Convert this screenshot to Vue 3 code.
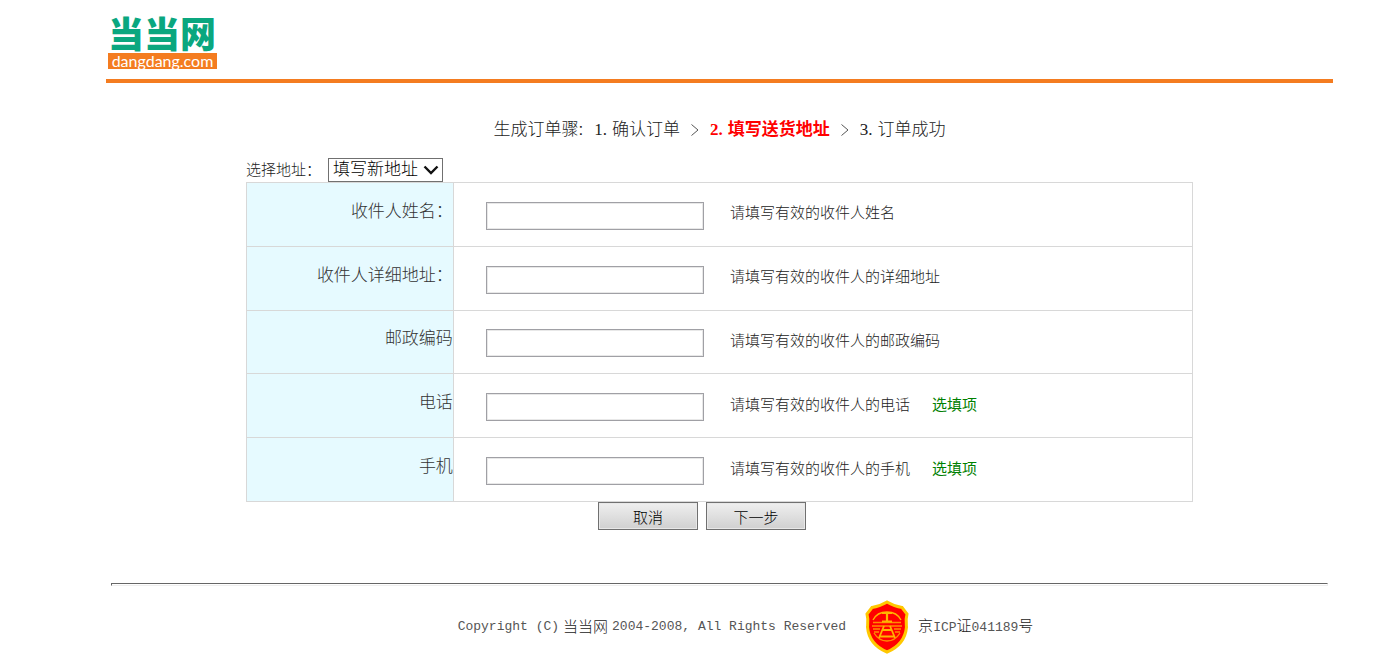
<template>
  <div class="page">
    <header class="header">
      <a href="#" class="logo">
        <span class="logo-name">当当网</span>
        <span class="logo-domain">dangdang.com</span>
      </a>
    </header>

    <main class="content">
      <div class="steps">
        <span>生成订单骤:</span>
        <template v-for="(step, index) in steps" :key="step">
          <svg v-if="index > 0" class="step-arrow" viewBox="0 0 8 14">
            <path d="M0.5 1.5 L7 7 L0.5 12.5" />
          </svg>
          <span :class="{ current: index === 1 }"><span class="step-number">{{ index + 1 }}.</span>{{ step }}</span>
        </template>
      </div>

      <form class="address-form" @submit.prevent>
        <div class="address-picker">
          <label for="address">选择地址：</label>
          <div class="select-box">
            <select id="address">
              <option>填写新地址</option>
            </select>
            <svg class="select-arrow" viewBox="0 0 16 10">
              <path d="M1.5 1.5 L8 8 L14.5 1.5" />
            </svg>
          </div>
        </div>

        <table class="address-table">
          <tbody>
            <tr v-for="field in fields" :key="field.id">
              <th scope="row"><label :for="field.id">{{ field.label }}</label></th>
              <td>
                <div class="field">
                  <input :id="field.id" v-model="form[field.id]" type="text">
                  <span class="hint">{{ field.hint }}</span>
                  <span v-if="field.optional" class="optional">选填项</span>
                </div>
              </td>
            </tr>
          </tbody>
        </table>

        <div class="actions">
          <button type="button">取消</button>
          <button type="submit">下一步</button>
        </div>
      </form>
    </main>

    <footer class="footer">
      <hr>
      <div class="footer-info">
        <p class="copyright">
          <span class="latin">Copyright (C)</span>
          <span>当当网</span>
          <span class="latin">2004-2008, All Rights Reserved</span>
        </p>
        <svg class="badge" viewBox="0 0 44 54">
          <path d="M22 2 C27 5 33 7 37 7.5 L42 14 C40.5 19 41 22 41.5 27 C40.5 38 34 47 22 52 C10 47 3.5 38 2.5 27 C3 22 3.5 19 2 14 L7 7.5 C11 7 17 5 22 2 Z" fill="#ff0000" stroke="#ffc800" stroke-width="3" />
          <g fill="none" stroke="#ff8c00" stroke-width="1.4">
            <path d="M8 22.5 H36 M7 26 H37 M8 29 H15 M29 29 H36 M9 32 H14 M30 32 H35" />
            <path d="M9 33 C12 38 17 41 22 41 C27 41 32 38 35 33" />
          </g>
          <g fill="none" stroke="#ffb400" stroke-width="1.8">
            <path d="M8 20 C11 14 16 12 22 12 C28 12 33 14 36 20" stroke-width="1.3" />
            <path d="M17 13 H27 M22 13 V21 M17 21.5 H27" stroke-width="2.2" />
            <path d="M19 26 L14 38 M25 26 L30 38 M17 30 H27 M15 36.5 H29" />
          </g>
        </svg>
        <p class="icp">京<span class="latin">ICP</span>证<span class="latin">041189</span>号</p>
      </div>
    </footer>
  </div>
</template>

<script setup>
import { reactive } from 'vue';

const steps = ['确认订单', '填写送货地址', '订单成功'];

const fields = [
  { id: 'name', label: '收件人姓名：', hint: '请填写有效的收件人姓名' },
  { id: 'detail', label: '收件人详细地址：', hint: '请填写有效的收件人的详细地址' },
  { id: 'zip', label: '邮政编码', hint: '请填写有效的收件人的邮政编码' },
  { id: 'phone', label: '电话', hint: '请填写有效的收件人的电话', optional: true },
  { id: 'mobile', label: '手机', hint: '请填写有效的收件人的手机', optional: true },
];

const form = reactive({ name: '', detail: '', zip: '', phone: '', mobile: '' });
</script>

<style>
body { margin: 0; background: #fff; }
</style>

<style scoped>
.page { margin: 0 40px 0 106px; color: #222; font-family: "Liberation Sans", "Noto Sans CJK SC", sans-serif; font-size: 15px; font-weight: 300; line-height: 20px; }

.header { padding: 18px 2px 10px; border-bottom: 4px solid #f47c20; }
.logo { display: flex; flex-direction: column; width: 109px; text-decoration: none; }
.logo-name { height: 35px; color: #0aa77f; font-size: 36px; font-weight: 900; line-height: 35px; white-space: nowrap; }
.logo-domain { background: #f47c20; color: #fff; font-family: Lato, sans-serif; font-size: 16px; font-weight: 400; line-height: 16px; text-align: center; }

.steps { display: flex; justify-content: center; align-items: center; gap: 11px; padding: 35px 0 16px; font-size: 17px; line-height: 24px; }
.step-number { margin-right: 5px; font-family: "Liberation Serif", serif; font-size: 17px; }
.step-arrow { width: 8px; height: 14px; fill: none; stroke: #555; stroke-width: 1; }
.current { color: #f00; font-weight: 700; }

.address-form { width: 77.2%; margin: 0 auto; }
.address-picker { display: flex; align-items: center; gap: 7px; }
.select-box { position: relative; }
.select-box select { display: block; width: 115px; height: 24px; padding: 0 4px; border: 1px solid #707070; border-radius: 0; appearance: none; background: #fff; color: #000; font-family: inherit; font-size: 17px; font-weight: 300; line-height: 20px; }
.select-arrow { position: absolute; top: 7px; right: 4px; width: 16px; height: 10px; fill: none; stroke: #111; stroke-width: 2.4; pointer-events: none; }

.address-table { width: 100%; height: 320px; border-collapse: collapse; table-layout: fixed; }
.address-table th, .address-table td { padding: 0; border: 1px solid #d8d8d8; }
.address-table th { width: 206px; padding-bottom: 5px; background: #e6faff; color: #333; font-size: 17px; font-weight: 300; text-align: right; }
.field { display: flex; align-items: center; padding: 3px 0 0 32px; }
.field input { box-sizing: border-box; width: 218px; height: 28px; padding: 0 4px; border: 1px solid #a0a0a5; border-radius: 0; box-shadow: inset 0 0 0 1px #e8e8e8; font-family: inherit; font-size: 15px; }
.hint { margin: 0 22px 5px 26px; }
.optional { margin-bottom: 5px; color: #008000; font-weight: 400; }

.actions { display: flex; justify-content: center; gap: 8px; padding-right: 35px; }
.actions button { width: 100px; height: 28px; padding: 0; border: 1px solid #707070; border-radius: 0; background: linear-gradient(#efefef, #d0d0d0); box-shadow: inset 0 0 0 1px #e8e8e8; color: #000; font-family: inherit; font-size: 15px; font-weight: 300; }

.footer { padding: 53px 5px 0; }
.footer hr { height: 1px; margin: 0; border: 1px solid; border-color: #666 #eee #eee #666; }
.footer-info { display: flex; justify-content: center; align-items: center; padding: 14px 0 6px 52px; }
.footer-info p { margin: 0; }
.copyright { display: flex; gap: 4px; }
.latin { color: #555; font-family: "Liberation Mono", monospace; font-size: 13px; }
.badge { width: 44px; height: 54px; margin: 0 9px 0 19px; }
</style>
